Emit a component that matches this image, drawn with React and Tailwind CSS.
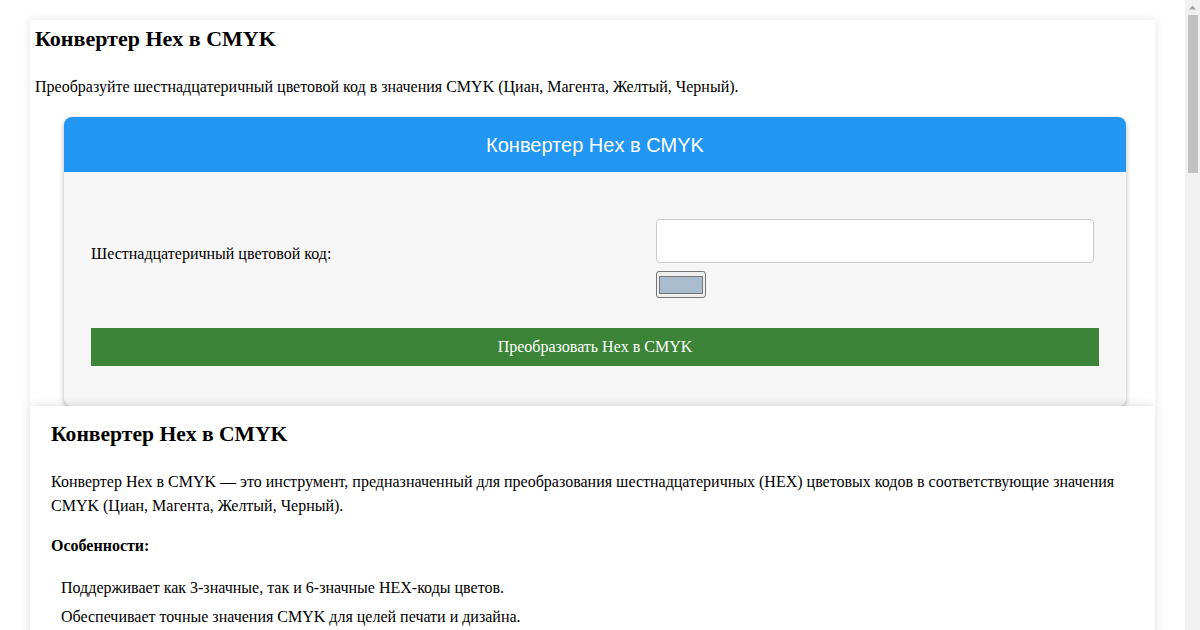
import React from 'react';

const features = [
  'Поддерживает как 3-значные, так и 6-значные HEX-коды цветов.',
  'Обеспечивает точные значения CMYK для целей печати и дизайна.',
  'Мгновенное преобразование без перезагрузки страницы.',
  'Встроенный выбор цвета для быстрого подбора оттенка.',
  'Простой и понятный интерфейс.',
];

const steps = [
  'Введите HEX-код цвета в поле ввода или выберите цвет с помощью палитры.',
  'Нажмите кнопку «Преобразовать Hex в CMYK».',
  'Получите значения Циан, Магента, Желтый и Черный в процентах.',
];

const App = () => {
  return (
    <div className="flex h-[630px] w-full overflow-hidden bg-white">
      <div className="flex-1 overflow-hidden px-[30px] pt-[20px] text-black font-['Liberation_Serif',serif]">
        {/* Tool card */}
        <div className="bg-white px-[5px] shadow-[0_0_10px_rgba(0,0,0,0.1)]">
          <h1 className="text-[22px] font-bold leading-[28px] pt-[5px]">Конвертер Hex в CMYK</h1>
          <p className="mt-[25px] text-[16px] leading-[18px]">
            Преобразуйте шестнадцатеричный цветовой код в значения CMYK (Циан, Магента, Желтый, Черный).
          </p>

          <div className="ml-[29px] mt-[21px] w-[1062px] rounded-lg shadow-[0_2px_5px_rgba(0,0,0,0.3)]">
            <div className="flex h-[55px] items-center justify-center rounded-t-lg bg-[#2196f3] text-[20px] text-white font-['Liberation_Sans',Arial,sans-serif]">
              Конвертер Hex в CMYK
            </div>
            <div className="rounded-b-lg bg-[#f6f6f6] px-[27px] pt-[47px] pb-[40px]">
              <div className="flex items-center">
                <label className="w-[565px] pb-[9px] text-[16px]">Шестнадцатеричный цветовой код:</label>
                <div className="flex flex-col">
                  <input
                    type="text"
                    className="h-[44px] w-[438px] rounded-[4px] border border-[#cccccc] bg-white px-2 outline-none"
                  />
                  <div className="mt-[8px] flex h-[27px] w-[50px] items-center justify-center rounded-[3px] border border-[#767676] bg-[#efefef]">
                    <div className="h-[18px] w-[44px] border border-[#777777] bg-[#aabdcf]" />
                  </div>
                </div>
              </div>
              <button className="mt-[30px] h-[38px] w-full bg-[#3b8438] text-[16px] text-white">
                Преобразовать Hex в CMYK
              </button>
            </div>
          </div>
        </div>

        {/* Description card */}
        <div className="bg-white px-[21px] pt-[15px] pb-[30px] shadow-[0_0_10px_rgba(0,0,0,0.15)]">
          <h2 className="text-[21.6px] font-bold leading-[27px]">Конвертер Hex в CMYK</h2>
          <p className="mt-[22px] text-[16px] leading-[24px]">
            Конвертер Hex в CMYK — это инструмент, предназначенный для преобразования шестнадцатеричных (HEX) цветовых кодов в соответствующие значения CMYK (Циан, Магента, Желтый, Черный).
          </p>
          <p className="mt-[16px] text-[16px] font-bold leading-[24px]">Особенности:</p>
          <ul className="mt-[18px] pl-[10px]">
            {features.map((f) => (
              <li key={f} className="mb-[5px] text-[16px] leading-[24px]">{f}</li>
            ))}
          </ul>
          <p className="mt-[16px] text-[16px] font-bold leading-[24px]">Как использовать:</p>
          <ul className="mt-[18px] pl-[10px]">
            {steps.map((s) => (
              <li key={s} className="mb-[5px] text-[16px] leading-[24px]">{s}</li>
            ))}
          </ul>
        </div>
      </div>

      {/* Scrollbar */}
      <div className="flex w-[15px] shrink-0 flex-col items-center bg-[#f1f1f1]">
        <svg width="15" height="15" viewBox="0 0 15 15" className="shrink-0">
          <path d="M4 9.5 L7.5 5.5 L11 9.5 Z" fill="#a3a3a3" />
        </svg>
        <div className="h-[158px] w-[10px] bg-[#c1c1c1]" />
      </div>
    </div>
  );
};

export default App;
